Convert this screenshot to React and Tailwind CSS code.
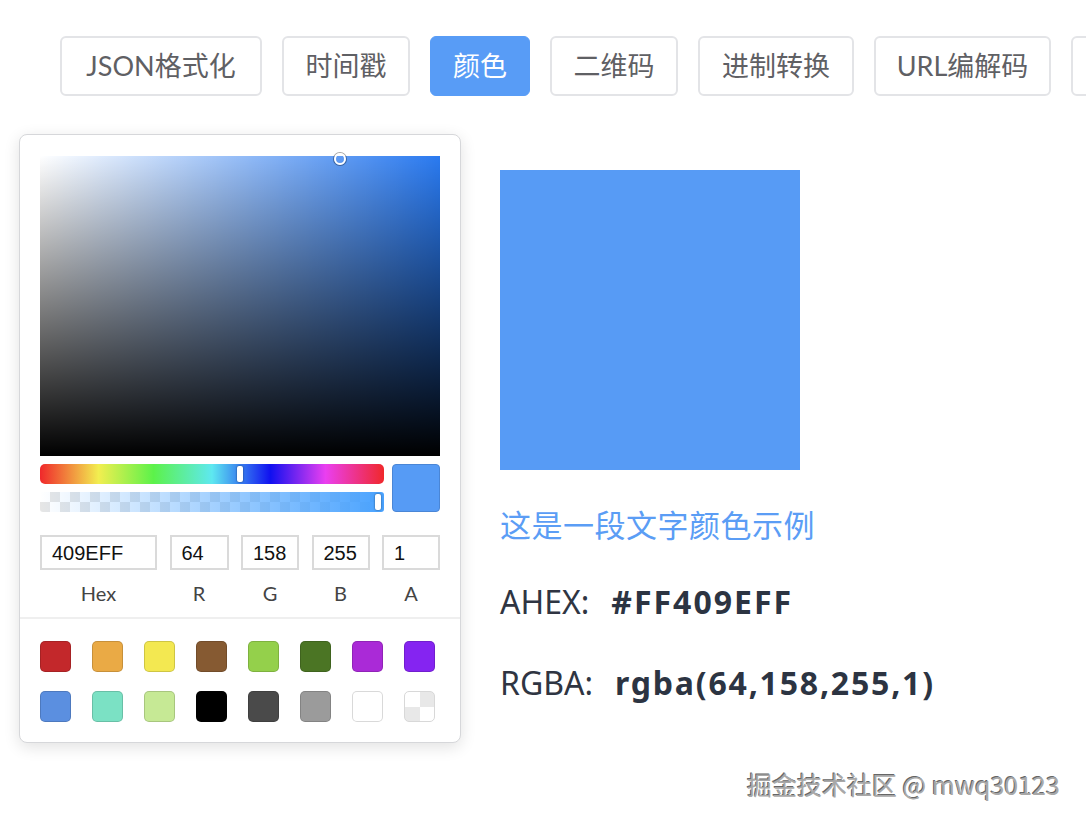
import React from "react";

const tabs = [
  { label: "JSON格式化", w: "w-[202px]" },
  { label: "时间戳", w: "w-[128px]" },
  { label: "颜色", w: "w-[100px]", active: true },
  { label: "二维码", w: "w-[128px]" },
  { label: "进制转换", w: "w-[156px]" },
  { label: "URL编解码", w: "w-[177px]" },
  { label: "", w: "w-[140px]" },
];

const swatches = [
  "bg-[#c3282b]",
  "bg-[#eaaa45]",
  "bg-[#f3e851]",
  "bg-[#865a32]",
  "bg-[#94d04b]",
  "bg-[#4b7524]",
  "bg-[#aa2ad7]",
  "bg-[#8524f1]",
  "bg-[#5b8fe0]",
  "bg-[#7be1c4]",
  "bg-[#c6e995]",
  "bg-[#000000]",
  "bg-[#4a4a4a]",
  "bg-[#9b9b9b]",
  "bg-[#ffffff]",
  "checker",
];

const inputs = [
  { v: "409EFF", w: "w-[117px]", l: "Hex" },
  { v: "64", w: "w-[59px]", l: "R" },
  { v: "158", w: "w-[58px]", l: "G" },
  { v: "255", w: "w-[58px]", l: "B" },
  { v: "1", w: "w-[58px]", l: "A" },
];

export default function App() {
  return (
    <div className="relative w-[1086px] h-[822px] overflow-hidden bg-white font-['Lato','Noto_Sans_CJK_SC',sans-serif]">
      {/* Tabs */}
      <div className="flex gap-[20px] pl-[60px] pt-[36px]">
        {tabs.map((t, idx) => (
          <div
            key={idx}
            className={`${t.w} shrink-0 h-[60px] flex items-center justify-center rounded-[6px] text-[27px] font-['Lato','Noto_Sans_CJK_SC',sans-serif] ${
              t.active
                ? "bg-[#589cf6] text-white border border-[#589cf6]"
                : "bg-white text-[#5f6064] border-2 border-[#e3e4e7]"
            }`}
          >
            {t.label}
          </div>
        ))}
      </div>

      <div className="flex pl-[19px] pt-[38px]">
        {/* Picker panel */}
        <div className="w-[442px] h-[609px] shrink-0 rounded-[8px] border border-[#d6d7da] bg-white shadow-[0_4px_16px_0_rgba(0,0,0,0.12)] flex flex-col">
          <div className="px-[20px] pt-[21px]">
            {/* saturation */}
            <div className="relative w-[400px] h-[300px] bg-[#2a7af0] bg-[image:linear-gradient(to_top,#000,rgba(0,0,0,0)),linear-gradient(to_right,#fff,rgba(255,255,255,0))]">
              <div className="absolute left-[294px] top-[-3px] w-[12px] h-[12px] rounded-full border-2 border-white shadow-[0_0_0_1px_rgba(0,0,0,0.35)]" />
            </div>
            {/* sliders */}
            <div className="flex gap-[8px] mt-[8px]">
              <div className="flex flex-col gap-[8px] w-[344px]">
                <div className="relative h-[20px] rounded-[5px] bg-[linear-gradient(to_right,#f0282b_0%,#f2ee50_17%,#5cf24a_33%,#5ee8f0_50%,#1010f0_67%,#ea3ff0_83%,#f0282b_100%)]">
                  <div className="absolute left-[197px] top-[2px] w-[6px] h-[16px] rounded-[2px] bg-white shadow-[0_0_2px_rgba(0,0,0,0.6)]" />
                </div>
                <div className="relative h-[20px] rounded-[3px] bg-[image:linear-gradient(to_right,rgba(64,158,255,0),rgba(64,158,255,0.95)),repeating-conic-gradient(#e6e6e6_0%_25%,#ffffff_0%_50%)] bg-[length:100%_100%,20px_20px]">
                  <div className="absolute left-[335px] top-[2px] w-[6px] h-[16px] rounded-[2px] bg-white shadow-[0_0_2px_rgba(0,0,0,0.6)]" />
                </div>
              </div>
              <div className="w-[48px] h-[48px] rounded-[4px] bg-[#569bf5] border border-[#4a86d6]" />
            </div>
            {/* inputs */}
            <div className="flex justify-between mt-[23px]">
              {inputs.map((i) => (
                <div key={i.l} className="flex flex-col items-center">
                  <div
                    className={`${i.w} h-[35px] border-2 border-[#dadada] flex items-center pl-[10px] text-[20px] text-[#111] font-['Liberation_Sans',sans-serif]`}
                  >
                    {i.v}
                  </div>
                  <div className="mt-[9px] text-[20px] text-[#444] leading-[28px]">{i.l}</div>
                </div>
              ))}
            </div>
          </div>
          {/* divider */}
          <div className="mt-[10px] h-[2px] bg-[#efefef]" />
          {/* swatches */}
          <div className="px-[20px] pt-[22px] grid grid-cols-8 gap-x-[21px] gap-y-[19px] w-[435px]">
            {swatches.map((s, idx) =>
              s === "checker" ? (
                <div
                  key={idx}
                  className="w-[31px] h-[31px] rounded-[5px] border border-[#d8d8d8] bg-[image:repeating-conic-gradient(#e8e8e8_0%_25%,#ffffff_0%_50%)] bg-[length:30px_30px]"
                />
              ) : (
                <div
                  key={idx}
                  className={`w-[31px] h-[31px] rounded-[5px] border border-[rgba(0,0,0,0.15)] ${s}`}
                />
              )
            )}
          </div>
        </div>

        {/* Right column */}
        <div className="ml-[39px] pt-[36px] flex flex-col">
          <div className="w-[300px] h-[300px] bg-[#579bf5]" />
          <div className="mt-[36px] text-[31px] leading-[36px] text-[#5b9df5] font-['Noto_Sans_CJK_SC',sans-serif] tracking-[0.5px]">
            这是一段文字颜色示例
          </div>
          <div className="mt-[40px] flex items-baseline text-[32px] leading-[40px] text-[#2f3542] font-['Noto_Sans',sans-serif]">
            <span className="font-normal">AHEX:</span>
            <span className="ml-[22px] font-bold tracking-[2px] text-[#2c3442]">#FF409EFF</span>
          </div>
          <div className="mt-[41px] flex items-baseline text-[32px] leading-[40px] text-[#2f3542] font-['Noto_Sans',sans-serif]">
            <span className="font-normal">RGBA:</span>
            <span className="ml-[22px] font-bold tracking-[1.8px] text-[#2c3442]">rgba(64,158,255,1)</span>
          </div>
        </div>
      </div>

      {/* watermark */}
      <div className="absolute left-[747px] top-[767px] text-[25px] leading-[34px] text-[#a8a8a8] font-['Noto_Sans_CJK_SC',sans-serif] [text-shadow:1px_1px_0_#fff,-1px_-1px_0_#666]">
        掘金技术社区 @ mwq30123
      </div>
    </div>
  );
}
